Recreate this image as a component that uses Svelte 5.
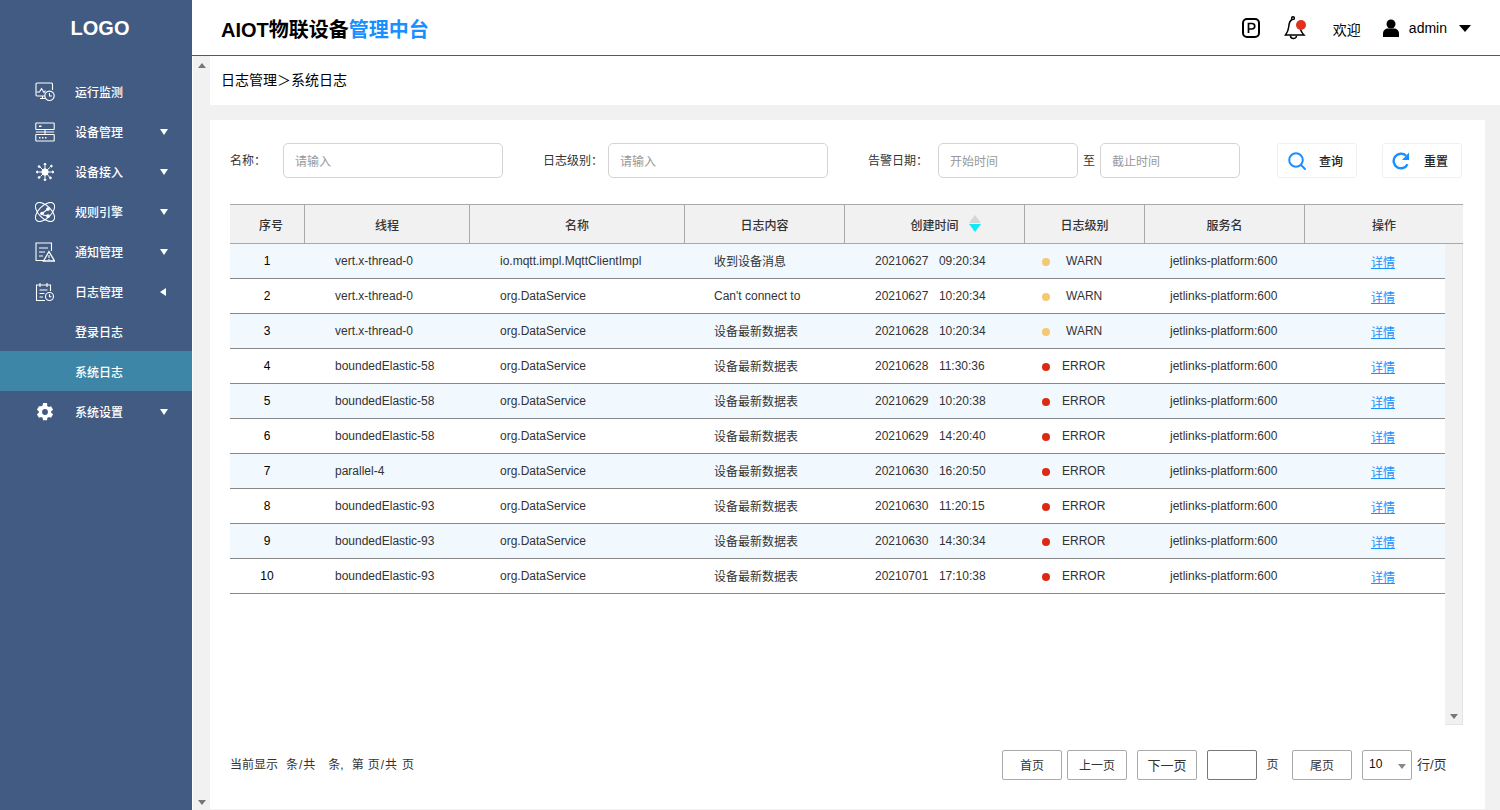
<script>
  const menu = [
    { label: '运行监测', icon: 'monitor' },
    { label: '设备管理', icon: 'server', arrow: 'down' },
    { label: '设备接入', icon: 'virus', arrow: 'down' },
    { label: '规则引擎', icon: 'atom', arrow: 'down' },
    { label: '通知管理', icon: 'notice', arrow: 'down' },
    { label: '日志管理', icon: 'log', arrow: 'left' },
    { label: '登录日志' },
    { label: '系统日志', active: true },
    { label: '系统设置', icon: 'gear', arrow: 'down' }
  ];
  const heads = ['序号', '线程', '名称', '日志内容', '创建时间', '日志级别', '服务名', '操作'];
  const rows = [
    ['vert.x-thread-0', 'io.mqtt.impl.MqttClientImpl', '收到设备消息', '20210627', '09:20:34', 'WARN'],
    ['vert.x-thread-0', 'org.DataService', "Can't connect to", '20210627', '10:20:34', 'WARN'],
    ['vert.x-thread-0', 'org.DataService', '设备最新数据表', '20210628', '10:20:34', 'WARN'],
    ['boundedElastic-58', 'org.DataService', '设备最新数据表', '20210628', '11:30:36', 'ERROR'],
    ['boundedElastic-58', 'org.DataService', '设备最新数据表', '20210629', '10:20:38', 'ERROR'],
    ['boundedElastic-58', 'org.DataService', '设备最新数据表', '20210629', '14:20:40', 'ERROR'],
    ['parallel-4', 'org.DataService', '设备最新数据表', '20210630', '16:20:50', 'ERROR'],
    ['boundedElastic-93', 'org.DataService', '设备最新数据表', '20210630', '11:20:15', 'ERROR'],
    ['boundedElastic-93', 'org.DataService', '设备最新数据表', '20210630', '14:30:34', 'ERROR'],
    ['boundedElastic-93', 'org.DataService', '设备最新数据表', '20210701', '17:10:38', 'ERROR']
  ];
  const isLatin = (s) => /^[\x00-\x7f]+$/.test(s);
</script>

<div class="app">
  <aside class="side">
    <div class="logo">LOGO</div>
    <nav class="nav">
      {#each menu as m}
        <div class="item" class:active={m.active}>
          <span class="ico">
            {#if m.icon === 'monitor'}
              <svg width="20" height="20" viewBox="0 0 20 20" fill="none" stroke="#fff" stroke-width="1.1"><path d="M10 14H2a1 1 0 0 1-1-1V2a1 1 0 0 1 1-1h14.500a1 1 0 0 1 1 1v6"/><path d="M1.500 10h3l2-3.500 2.500 4 1.500-2"/><path d="M5 16.500h5M7.500 14v2.500"/><circle cx="14.500" cy="13.800" r="4.700" /><path d="M14.500 11v3h2.500"/></svg>
            {:else if m.icon === 'server'}
              <svg width="20" height="20" viewBox="0 0 20 20" fill="none" stroke="#fff" stroke-width="1.1"><rect x="0.800" y="1" width="18.400" height="6.500" rx=".5"/><rect x="0.800" y="12.500" width="18.400" height="6.500" rx=".5"/><path d="M10 7.500v5M0.800 10h18.400"/><path d="M4 4.200h2.500M4 15.800h1.500M7 15.800h1.500M10 15.800h1.500" stroke-width="1.500"/></svg>
            {:else if m.icon === 'virus'}
              <svg width="20" height="20" viewBox="-1 -1 22 22" fill="#fff" stroke="#fff" stroke-width="1.100"><circle cx="10" cy="10" r="3.500"/><path d="M10 10V3M10 10l5.500-5M10 10h7M10 10l5 5.500M10 10v7M10 10l-5 5M10 10H3M10 10 4.500 4.500"/><circle cx="10" cy="1.500" r="1"/><circle cx="17" cy="3.500" r="1"/><circle cx="18.500" cy="10" r="1"/><circle cx="16" cy="16.500" r="1"/><circle cx="10" cy="18.500" r="1"/><circle cx="3.500" cy="16" r="1"/><circle cx="1.500" cy="10" r="1"/><circle cx="3.500" cy="4" r="1"/></svg>
            {:else if m.icon === 'atom'}
              <svg width="20" height="20" viewBox="0 0 20 20" fill="none" stroke="#fff" stroke-width="1.100"><ellipse cx="10" cy="10" rx="12" ry="6.200" transform="rotate(45 10 10)"/><ellipse cx="10" cy="10" rx="12" ry="6.200" transform="rotate(-45 10 10)"/><path d="M7 11.500 13 7M8 13l5 1"/><circle cx="7" cy="11.500" r="1.300" fill="#fff"/><circle cx="13" cy="7" r="1.300" fill="#fff"/><circle cx="13" cy="14" r="1.300" fill="#fff"/></svg>
            {:else if m.icon === 'notice'}
              <svg width="20" height="20" viewBox="0 0 20 20" fill="none" stroke="#fff" stroke-width="1.100"><path d="M9 18.500H1V1h15.500v8"/><path d="M4 6h9M4 10h6M4 14h4"/><path d="M14 9.500 19.500 19H8.500z" stroke-width="1.300"/><path d="M14 13v3M14 17v1"/></svg>
            {:else if m.icon === 'log'}
              <svg width="20" height="20" viewBox="0 0 20 20" fill="none" stroke="#fff" stroke-width="1.100"><path d="M10 18.500H1.500V3h14v6"/><path d="M5 1v4M12 1v4"/><path d="M4.500 8h8M4.500 11.500h5M4.500 15h3.500"/><circle cx="14.500" cy="14.500" r="4"/><path d="M14.500 12.200v2.500h2"/></svg>
            {:else if m.icon === 'gear'}
              <svg width="20" height="20" viewBox="0 0 24 24" fill="#fff"><path fill-rule="evenodd" d="M19.400 13a7.500 7.500 0 0 0 0-2l2.300-1.800-2.400-4.200-2.700 1.100a7.500 7.500 0 0 0-1.800-1L14.400 1.200H9.600l-.4 2.900a7.500 7.500 0 0 0-1.800 1L4.700 5 2.300 9.200 4.600 11a7.500 7.500 0 0 0 0 2l-2.300 1.800 2.400 4.200 2.700-1.100a7.500 7.500 0 0 0 1.800 1l.4 2.900h4.800l.4-2.900a7.500 7.500 0 0 0 1.800-1l2.700 1.100 2.400-4.200zM12 15.500a3.500 3.500 0 1 1 0-7 3.500 3.500 0 0 1 0 7z"/></svg>
            {/if}
          </span>
          <span class="label">{m.label}</span>
          {#if m.arrow}<span class="arrow {m.arrow}"></span>{/if}
        </div>
      {/each}
    </nav>
  </aside>

  <div class="right">
    <header class="top">
      <h1 class="title">AIOT物联设备<span>管理中台</span></h1>
      <div class="tools">
        <svg class="park" width="20" height="22" viewBox="0 0 20 22" fill="none" stroke="#000" stroke-width="2"><rect x="2" y="2" width="16" height="18" rx="4"/><path d="M7.500 16V6.500h3.500a2.700 2.700 0 0 1 0 5.500H7.500" stroke-width="1.700"/></svg>
        <svg class="bell" width="24" height="26" viewBox="0 0 24 26" fill="none" stroke="#000" stroke-width="1.500"><circle cx="9" cy="3.200" r="1.400"/><path d="M8 4.500C5.500 6 5 8.500 4.800 11.500 4.500 15 3.300 17.500 1.500 20H20C17.500 17.500 16 14.500 15.500 10"/><path d="M6.500 20.500a3 3 0 0 0 6 .2"/><circle cx="17" cy="10" r="5" fill="#e0321f" stroke="none"/></svg>
        <span class="hello">欢迎</span>
        <svg class="user" width="16" height="18" viewBox="0 0 16 18" fill="#000"><circle cx="8" cy="5" r="4.500"/><path d="M0 18v-3.500C0 11 3 9.500 4.500 9.500h7c1.500 0 4.500 1.500 4.500 5V18z"/></svg>
        <span class="name">admin</span>
        <span class="caret"></span>
      </div>
    </header>

    <div class="body">
      <div class="vbar">
        <span class="up"></span>
        <span class="down"></span>
      </div>
      <main class="main">
        <div class="crumb">日志管理＞系统日志</div>
        <section class="card">
          <div class="filters">
            <label class="f-label l1" for="f1">名称：</label>
            <input id="f1" class="inp w220" placeholder="请输入" />
            <label class="f-label l2" for="f2">日志级别：</label>
            <input id="f2" class="inp w220" placeholder="请输入" />
            <label class="f-label l3" for="f3">告警日期：</label>
            <input id="f3" class="inp w140" placeholder="开始时间" />
            <span class="to">至</span>
            <input class="inp w140" placeholder="截止时间" />
            <button class="act q">
              <svg width="20" height="20" viewBox="0 0 20 20" fill="none" stroke="#1890ff" stroke-width="2"><circle cx="9" cy="9" r="6.800"/><path d="M14 14l4 4" stroke-linecap="round"/></svg>
              <span>查询</span>
            </button>
            <button class="act r">
              <svg width="18" height="18" viewBox="0 0 18 18" fill="none"><path d="M15.500 12.200A7.300 7.300 0 1 1 14 3.700" stroke="#1890ff" stroke-width="2.400"/><path d="M17 0.500V8h-7z" fill="#1890ff"/></svg>
              <span>重置</span>
            </button>
          </div>

          <div class="table">
            <div class="thead">
              {#each heads as h, i}
                <div class="th" class:first={i === 0}>
                  {h}
                  {#if i === 4}
                    <span class="sort"><i class="s-up"></i><i class="s-down"></i></span>
                  {/if}
                </div>
              {/each}
            </div>
            <div class="tbody-wrap">
              <div class="tbody">
                {#each rows as r, i}
                  <div class="tr" class:odd={i % 2 === 0}>
                    <div class="td c0">{i + 1}</div>
                    <div class="td c1">{r[0]}</div>
                    <div class="td c2">{r[1]}</div>
                    <div class="td c3" class:cjk={!isLatin(r[2])}>{r[2]}</div>
                    <div class="td c4"><span>{r[3]}</span><span>{r[4]}</span></div>
                    <div class="td c5">
                      <i class="dot" class:err={r[5] === 'ERROR'}></i>
                      <span class:warn={r[5] === 'WARN'}>{r[5]}</span>
                    </div>
                    <div class="td c6">jetlinks-platform:600</div>
                    <div class="td c7"><a href="#top">详情</a></div>
                  </div>
                {/each}
              </div>
              <div class="tbar"><span class="down"></span></div>
            </div>
          </div>

          <div class="pager">
            <div class="summary">
              <span class="g8">当前显示</span><span class="g12 ls">条/共</span><span class="g8">条,</span><span class="g4">第</span><span class="g4 ls">页/共</span><span>页</span>
            </div>
            <div class="pg">
              <button class="pb">首页</button>
              <button class="pb m5">上一页</button>
              <button class="pb m10 big">下一页</button>
              <input class="pi" aria-label="页" />
              <span class="pt">页</span>
              <button class="pb">尾页</button>
              <div class="sel">10<span class="sc"></span></div>
              <span class="pt2">行/页</span>
            </div>
          </div>
        </section>
      </main>
    </div>
  </div>
</div>

<style>
  :global(body) { margin: 0; background: #fff; }
  .app {
    display: flex; width: 1500px; height: 810px; overflow: hidden;
    font-family: "Liberation Sans", "Noto Sans CJK SC", sans-serif; color: #333; font-size: 12px;
  }
  .side { width: 192px; flex: none; background: #415b83; color: #fff; }
  .logo { height: 56px; line-height: 56px; text-align: center; font-size: 20px; font-weight: 700; padding-left: 8px; box-sizing: border-box; }
  .nav { padding-top: 15px; }
  .item { position: relative; height: 40px; display: flex; align-items: center; font-size: 12px; font-weight: 500; }
  .item.active { background: #3d86a8; }
  .ico { width: 20px; height: 20px; margin: 1px 20px 0 35px; flex: none; display: block; }
  .ico svg { display: block; }
  .label { line-height: 40px; padding-top: 4px; }
  .arrow { position: absolute; width: 0; height: 0; border-style: solid; border-color: transparent; }
  .arrow.down { left: 160px; top: 18px; border-width: 6px 4.500px 0; border-top-color: #fff; }
  .arrow.left { left: 160px; top: 17px; border-width: 4.500px 6px 4.500px 0; border-right-color: #fff; }

  .right { flex: 1; min-width: 0; display: flex; flex-direction: column; }
  .top {
    height: 55px; flex: none; display: flex; align-items: center; justify-content: space-between;
    border-bottom: 1px solid #415b83; padding: 0 29px 0 29px; background: #fff;
  }
  .title { margin: 0; font-size: 20px; font-weight: 700; color: #000; padding-top: 2px; }
  .title span { color: #1890ff; }
  .tools { display: flex; align-items: center; color: #000; font-size: 14px; }
  .park { margin-right: 23px; }
  .bell { margin-right: 25px; }
  .hello { margin-right: 22px; padding-top: 3px; }
  .user { margin-right: 10px; margin-top: 1px; }
  .name { margin-right: 12px; }
  .caret { width: 0; height: 0; margin-top: 1px; border-style: solid; border-color: #000 transparent transparent; border-width: 7px 6.500px 0; }

  .body { flex: 1; display: flex; min-height: 0; }
  .vbar { position: relative; width: 17px; margin-left: 1px; flex: none; background: #f1f1f1; }
  .up, .down { position: absolute; left: 5px; width: 0; height: 0; border-style: solid; border-color: transparent; }
  .up { top: 7px; border-width: 0 4.500px 5px; border-bottom-color: #777; }
  .down { bottom: 5px; border-width: 5px 4.500px 0; border-top-color: #777; }

  .main { flex: 1; min-width: 0; background: #f1f1f1; display: flex; flex-direction: column; }
  .crumb { height: 49px; flex: none; background: #fff; padding-left: 11px; line-height: 49px; font-size: 14px; color: #000; }
  .card { margin: 15px 15px 1px 0; flex: 1; background: #fff; padding: 23px 0 0 20px; box-sizing: border-box; min-height: 0; display: flex; flex-direction: column; }

  .filters { display: flex; align-items: center; height: 35px; }
  .f-label { font-size: 12px; color: #333; flex: none; padding-bottom: 2px; }
  .l1 { width: 53px; }
  .l2 { margin-left: 40px; width: 65px; }
  .l3 { margin-left: 40px; width: 70px; }
  .inp {
    box-sizing: border-box; height: 35px; border: 1px solid #d4d4d4; border-radius: 5px; padding: 2px 11px 0;
    font: inherit; font-size: 12px; outline: none; flex: none; background: #fff;
  }
  .inp::placeholder { color: #999; opacity: 1; }
  .w220 { width: 220px; }
  .w140 { width: 140px; }
  .to { width: 22px; text-align: center; font-size: 12px; color: #333; flex: none; padding-bottom: 2px; }
  .act {
    box-sizing: border-box; width: 80px; height: 35px; flex: none; border: 1px solid #f0f0f0; border-radius: 3px; background: #fff;
    display: flex; align-items: center; padding: 0 0 0 9px; font: inherit; font-size: 12px; color: #222; font-weight: 500;
  }
  .act.q { margin-left: 37px; }
  .act.q span { margin-left: 12px; }
  .act.r { margin-left: 25px; }
  .act.r span { margin-left: 14px; }

  .table { margin-top: 26px; width: 1233px; }
  .thead {
    display: grid; grid-template-columns: 75px 165px 215px 160px 180px 120px 160px 158px; height: 40px; box-sizing: border-box;
    background: #f1f1f1; border-top: 1px solid #a9a9a9; border-bottom: 1px solid #a9a9a9;
  }
  .th { display: flex; align-items: center; justify-content: center; font-weight: 500; color: #333; border-right: 1px solid #a9a9a9; position: relative; padding-top: 1px; }
  .th.first { padding-left: 8px; }
  .th:last-child { border-right: 0; }
  .sort { position: absolute; left: 124px; top: 10px; display: block; width: 12px; height: 18px; }
  .s-up, .s-down { position: absolute; left: 0; width: 0; height: 0; border-style: solid; border-color: transparent; }
  .s-up { top: 0; border-width: 0 6px 8px; border-bottom-color: #d5d5d5; }
  .s-down { top: 9px; border-width: 8px 6px 0; border-top-color: #10e8f5; }

  .tbody-wrap { display: flex; height: 481px; }
  .tbody { width: 1215px; flex: none; }
  .tbar { position: relative; width: 17px; background: #f1f1f1; border-right: 1px solid #e4e4e4; border-bottom: 1px solid #e4e4e4; }
  .tr {
    display: grid; grid-template-columns: 74px 165px 215px 160px 180px 120px 160px 141px; height: 35px; box-sizing: border-box;
    border-bottom: 1px solid #888; align-items: center;
  }
  .tr.odd { background: #f1f8fe; }
  .td { white-space: nowrap; color: #333; }
  .c0 { text-align: center; color: #000; }
  .c1, .c2, .c4 { padding-left: 31px; }
  .c3 { padding-left: 30px; }
  .c3.cjk { padding-bottom: 2px; }
  .c4 span + span { margin-left: 10.500px; }
  .c5 { display: flex; align-items: center; padding-left: 18px; }
  .dot { width: 8px; height: 8px; border-radius: 50%; background: #f5c971; margin-right: 12px; margin-top: 2px; flex: none; }
  .dot.err { background: #dc2a12; }
  .warn { margin-left: 4px; }
  .c6 { padding-left: 26px; }
  .c7 { padding-left: 67px; }
  .c7 a { color: #1890ff; text-decoration: underline; }

  .pager { display: flex; justify-content: space-between; align-items: center; margin-top: 25px; height: 30px; padding-right: 38px; }
  .summary { color: #333; display: flex; padding-bottom: 4px; }
  .g8 { margin-right: 8px; }
  .g12 { margin-right: 12px; }
  .g4 { margin-right: 4px; }
  .ls { letter-spacing: 1px; }
  .pg { display: flex; align-items: center; }
  .pb { box-sizing: border-box; width: 60px; height: 30px; background: #fff; border: 1px solid #aaa; border-radius: 2px; font: inherit; font-size: 12px; color: #333; padding: 0 0 2px; }
  .big { font-size: 13px; }
  .m5 { margin-left: 5px; }
  .m10 { margin-left: 10px; }
  .pi { box-sizing: border-box; width: 50px; height: 30px; margin-left: 10px; border: 1px solid #777; border-radius: 2px; outline: none; }
  .pt { width: 31px; padding-right: 4px; text-align: center; padding-bottom: 4px; }
  .sel { position: relative; box-sizing: border-box; width: 50px; height: 30px; margin-left: 10px; border: 1px solid #aaa; border-radius: 2px; line-height: 26px; padding-left: 6px; color: #111; }
  .sc { position: absolute; right: 5px; top: 13px; width: 0; height: 0; border-style: solid; border-color: #888 transparent transparent; border-width: 5px 4.500px 0; }
  .pt2 { margin-left: 5px; width: 30px; white-space: nowrap; font-size: 13px; padding-bottom: 3px; }
</style>
